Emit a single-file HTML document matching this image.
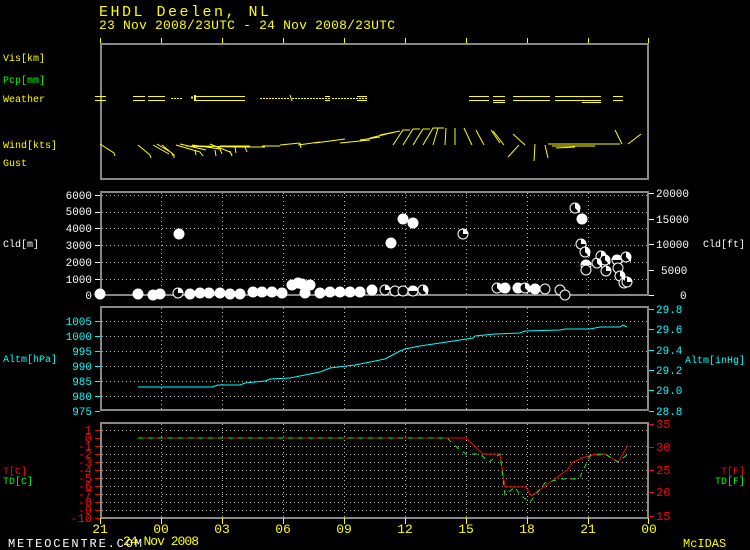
<!DOCTYPE html>
<html><head><meta charset="utf-8"><style>
html,body{margin:0;padding:0;background:#000;}
svg{display:block;}
text{font-family:"Liberation Mono",monospace;}
</style></head><body>
<svg width="750" height="550" viewBox="0 0 750 550" xmlns="http://www.w3.org/2000/svg">
<rect width="750" height="550" fill="#000"/>
<text x="99" y="16" font-size="15" fill="#ff0" textLength="170">EHDL  Deelen,  NL</text>
<text x="99" y="29" font-size="13" fill="#ff0" textLength="296">23 Nov 2008/23UTC - 24 Nov 2008/23UTC</text>
<g stroke="#ff0" stroke-width="1">
<line x1="100.5" y1="38" x2="100.5" y2="43"/><line x1="161.5" y1="38" x2="161.5" y2="43"/><line x1="222.5" y1="38" x2="222.5" y2="43"/><line x1="283.5" y1="38" x2="283.5" y2="43"/><line x1="344.5" y1="38" x2="344.5" y2="43"/><line x1="405.5" y1="38" x2="405.5" y2="43"/><line x1="466.5" y1="38" x2="466.5" y2="43"/><line x1="527.5" y1="38" x2="527.5" y2="43"/><line x1="588.5" y1="38" x2="588.5" y2="43"/><line x1="648.5" y1="38" x2="648.5" y2="43"/>
</g>
<g fill="none" stroke="#888" stroke-width="2">
<rect x="101" y="44" width="547" height="135"/>
<rect x="101" y="192" width="547" height="103"/>
<rect x="101" y="307" width="547" height="103"/>
<rect x="101" y="423" width="547" height="95"/>
</g>
<g stroke="#bbb" stroke-width="1" stroke-dasharray="1 3">
<path d="M161.5 193V294M222.5 193V294M283.5 193V294M344.5 193V294M405.5 193V294M466.5 193V294M527.5 193V294M588.5 193V294"/>
<path d="M102 195.5H647M102 212.5H647M102 228.5H647M102 245.5H647M102 262.5H647M102 279.5H647"/>
<path d="M161.5 308V409M222.5 308V409M283.5 308V409M344.5 308V409M405.5 308V409M466.5 308V409M527.5 308V409M588.5 308V409"/>
<path d="M102 321.5H647M102 336.5H647M102 351.5H647M102 366.5H647M102 381.5H647M102 396.5H647"/>
<path d="M161.5 424V517M222.5 424V517M283.5 424V517M344.5 424V517M405.5 424V517M466.5 424V517M527.5 424V517M588.5 424V517"/>
<path d="M102 430.5H647M102 446.5H647M102 454.5H647M102 462.5H647M102 470.5H647M102 478.5H647M102 486.5H647M102 494.5H647M102 502.5H647M102 510.5H647"/>
</g>
<g font-size="10">
<text x="3" y="61" fill="#ff0">Vis[km]</text>
<text x="3" y="83" fill="#0f0">Pcp[mm]</text>
<text x="3" y="102" fill="#ff0">Weather</text>
<text x="3" y="148" fill="#ff0">Wind[kts]</text>
<text x="3" y="166" fill="#ff0">Gust</text>
<text x="3" y="247" fill="#fff">Cld[m]</text>
<text x="3" y="362" fill="#0ff">Altm[hPa]</text>
<text x="3" y="474" fill="#f00">T[C]</text>
<text x="3" y="484" fill="#0f0">TD[C]</text>
<text x="703" y="247" fill="#fff">Cld[ft]</text>
<text x="685" y="363" fill="#0ff">Altm[inHg]</text>
<text x="721" y="474" fill="#f00">T[F]</text>
<text x="715" y="484" fill="#0f0">TD[F]</text>
</g>
<g font-size="11" fill="#fff" text-anchor="end">
<text x="92" y="199">6000</text><text x="92" y="215">5000</text><text x="92" y="232">4000</text><text x="92" y="249">3000</text><text x="92" y="266">2000</text><text x="92" y="283">1000</text><text x="92" y="299">0</text>
</g>
<g font-size="11" fill="#fff">
<text x="656" y="197">20000</text><text x="656" y="223">15000</text><text x="656" y="248">10000</text><text x="661" y="274">5000</text><text x="680" y="299">0</text>
</g>
<g stroke="#fff"><path d="M95 195.5H100M95 212.5H100M95 228.5H100M95 245.5H100M95 262.5H100M95 279.5H100M95 295.5H100M649 193.5H654M649 219.5H654M649 244.5H654M649 270.5H654M649 295.5H654"/></g>
<g font-size="11" fill="#0ff" text-anchor="end">
<text x="92" y="325">1005</text><text x="92" y="340">1000</text><text x="92" y="355">995</text><text x="92" y="370">990</text><text x="92" y="385">985</text><text x="92" y="400">980</text><text x="92" y="415">975</text>
</g>
<g font-size="11" fill="#0ff">
<text x="656" y="313">29.8</text><text x="656" y="333">29.6</text><text x="656" y="354">29.4</text><text x="656" y="374">29.2</text><text x="656" y="394">29.0</text><text x="656" y="415">28.8</text>
</g>
<g stroke="#0ff"><path d="M95 321.5H100M95 336.5H100M95 351.5H100M95 366.5H100M95 381.5H100M95 396.5H100M95 411.5H100M649 309.5H654M649 329.5H654M649 350.5H654M649 370.5H654M649 390.5H654M649 411.5H654"/></g>
<g font-size="12" fill="#f00" text-anchor="end">
<text x="92" y="434">1</text><text x="92" y="442">0</text><text x="92" y="450">-1</text><text x="92" y="458">-2</text><text x="92" y="466">-3</text><text x="92" y="474">-4</text><text x="92" y="482">-5</text><text x="92" y="490">-6</text><text x="92" y="498">-7</text><text x="92" y="506">-8</text><text x="92" y="514">-9</text><text x="92" y="522">-10</text>
</g>
<g font-size="12" fill="#f00">
<text x="656" y="428">35</text><text x="656" y="451">30</text><text x="656" y="474">25</text><text x="656" y="496">20</text><text x="656" y="520">15</text>
</g>
<g stroke="#f00"><path d="M95 430.5H100M95 438.5H100M95 446.5H100M95 454.5H100M95 462.5H100M95 470.5H100M95 478.5H100M95 486.5H100M95 494.5H100M95 502.5H100M95 510.5H100M95 518.5H100M649 424.5H654M649 447.5H654M649 470.5H654M649 492.5H654M649 516.5H654"/></g>
<g stroke="#ff0"><path d="M100.5 518V524M161.5 518V524M222.5 518V524M283.5 518V524M344.5 518V524M405.5 518V524M466.5 518V524M527.5 518V524M588.5 518V524M648.5 518V524"/></g>
<g font-size="13" fill="#ff0" text-anchor="middle">
<text x="100" y="533">21</text><text x="161" y="533">00</text><text x="222" y="533">03</text><text x="283" y="533">06</text><text x="344" y="533">09</text><text x="405" y="533">12</text><text x="466" y="533">15</text><text x="527" y="533">18</text><text x="588" y="533">21</text><text x="649" y="533">00</text>
</g>
<text x="123" y="545" font-size="13" fill="#ff0" textLength="76">24 Nov 2008</text>
<text x="8" y="547" font-size="12" fill="#fff" textLength="134">METEOCENTRE.COM</text>
<text x="683" y="547" font-size="12" fill="#ff0">McIDAS</text>
<g stroke="#ff0" stroke-width="1">
<path d="M95 96.5H106M95 100.5H106M133 96.5H145M133 100.5H145M148 96.5H165M148 100.5H165M195 96.5H245M195 100.5H245M469 96.5H489M469 100.5H489M493 96.5H505M493 100.5H505M493 102.5H505M513 96.5H550M513 100.5H550M555 96.5H572M555 100.5H572M572 96.5H601M572 100.5H601M582 102.5H601M613 96.5H623M613 100.5H623"/>
<path d="M195 95V101M191 97.5H193" stroke-width="2"/>
<path d="M171 98.5H182M260 98.5H290M292 98.5H330M332 98.5H367" stroke-dasharray="2 1"/>
<path d="M357 96.5H367M357 100.5H367M325 96.5H330M325 100.5H330M290 95L292 101"/>
</g>
<g stroke="#ff0" stroke-width="1" fill="none">
<path d="M100 144L114 153L115 156M138 145L150 155L151 158M153 145L169 154M157 144L172 153L173 156M162 145L174 155L174 158"/>
<path d="M176 145L200 152L203 156M180 144L206 150M186 146L212 147M192 145L220 149L222 154M200 146L235 147L236 153M210 144L230 152L232 155M220 146L250 146M235 147L265 147M262 146L280 146M280 145L300 143M298 145L320 142M315 143L345 139M340 143L370 140M360 140L380 137M370 138L395 132M380 135L400 131"/>
<path d="M195 150L196 155M215 150L216 156M230 151L232 156M245 147L247 152M300 143L301 148"/>
<path d="M393 145L403 130L410 130M403 145L413 129L420 129M413 145L423 129L430 129M423 145L433 128L440 128M433 145L438 128L444 128M445 145L446 128M455 145L455 128M464 128L472 145M476 130L484 145M491 130L500 143M493 131L504 145M513 134L525 145M519 145L508 157M535 144L534 161M545 145L548 158M548 144L620 144M552 146L595 146M556 148L575 147M600 144L620 144M615 130L622 144M628 144L641 134"/>
</g>
<polyline fill="none" stroke="#0ff" stroke-width="1" points="138,387 212,387 218,385 240,385 245,383 265,381 270,379 290,378 305,375 320,372 330,368 355,365 385,359 400,351 405,349 420,346 440,343 460,340 473,338 475,336 495,334 520,333 525,331 560,330 565,329 590,329 600,327 620,327 623,325 627,327"/>
<polyline fill="none" stroke="#f00" points="138,438 466,438 483,454 500,454 505,487 526,487 531,496 567,470 573,462 582,458 595,454 605,454 618,462 628,445"/>
<polyline fill="none" stroke="#0f0" stroke-dasharray="5 5" points="138,438 447,438 460,450 466,454 480,454 489,462 500,454 505,495 515,487 520,495 530,502 545,483 560,479 579,479 590,456 605,454 618,462 628,454"/>
<g fill="#fff" stroke="#fff">
<circle cx="100" cy="294" r="5"/><circle cx="138" cy="294" r="5"/><circle cx="153" cy="295" r="5"/><circle cx="160" cy="294" r="5"/><circle cx="179" cy="234" r="5"/>
<circle cx="190" cy="294" r="5"/><circle cx="200" cy="293" r="5"/><circle cx="209" cy="293" r="5"/><circle cx="220" cy="293" r="5"/><circle cx="230" cy="294" r="5"/><circle cx="240" cy="294" r="5"/><circle cx="253" cy="292" r="5"/><circle cx="262" cy="292" r="5"/><circle cx="272" cy="292" r="5"/><circle cx="282" cy="293" r="5"/><circle cx="292" cy="285" r="5"/><circle cx="298" cy="283" r="5"/><circle cx="302" cy="284" r="5"/><circle cx="310" cy="285" r="5"/><circle cx="305" cy="293" r="5"/><circle cx="320" cy="293" r="5"/><circle cx="330" cy="292" r="5"/><circle cx="340" cy="292" r="5"/><circle cx="350" cy="292" r="5"/><circle cx="360" cy="292" r="5"/><circle cx="372" cy="290" r="5"/><circle cx="391" cy="243" r="5"/><circle cx="403" cy="219" r="5"/><circle cx="413" cy="223" r="5"/>
<circle cx="505" cy="288" r="5"/><circle cx="518" cy="288" r="5"/><circle cx="535" cy="289" r="5"/><circle cx="582" cy="219" r="5"/>
</g>
<g fill="#000" stroke="#fff">
<circle cx="178" cy="293" r="5"/><circle cx="385" cy="290" r="5"/><circle cx="395" cy="291" r="5"/><circle cx="403" cy="291" r="5"/><circle cx="413" cy="291" r="5"/><circle cx="423" cy="290" r="5"/><circle cx="463" cy="234" r="5"/><circle cx="497" cy="288" r="5"/><circle cx="525" cy="288" r="5"/><circle cx="545" cy="289" r="5"/><circle cx="560" cy="290" r="5"/><circle cx="565" cy="295" r="5"/><circle cx="575" cy="208" r="5"/><circle cx="581" cy="244" r="5"/><circle cx="585" cy="252" r="5"/><circle cx="586" cy="265" r="5"/><circle cx="586" cy="270" r="5"/><circle cx="597" cy="263" r="5"/><circle cx="601" cy="256" r="5"/><circle cx="606" cy="271" r="5"/><circle cx="605" cy="260" r="5"/><circle cx="617" cy="260" r="5"/><circle cx="626" cy="257" r="5"/><circle cx="618" cy="268" r="5"/><circle cx="620" cy="276" r="5"/><circle cx="624" cy="283" r="5"/><circle cx="627" cy="282" r="5"/>
</g>
<g fill="#fff">
<path d="M178 293V288A5 5 0 0 1 183 293Z"/><path d="M385 290V285A5 5 0 0 1 390 290Z"/><path d="M413 291H408A5 5 0 0 1 418 291Z"/><path d="M423 290V285A5 5 0 0 1 428 290V295Z"/><path d="M463 234V229A5 5 0 0 1 468 234Z"/><path d="M497 288V283A5 5 0 0 1 502 288V293Z"/><path d="M525 288V283A5 5 0 0 1 530 288V293Z"/><path d="M575 208V203A5 5 0 0 1 580 208V213Z"/><path d="M581 244V239A5 5 0 0 1 586 244Z"/><path d="M585 252V247A5 5 0 0 1 590 252V257Z"/><path d="M586 265H581A5 5 0 0 1 591 265Z"/><path d="M597 263V258A5 5 0 0 1 602 263V268Z"/><path d="M601 256V251A5 5 0 0 1 606 256Z"/><path d="M605 260V255A5 5 0 0 1 610 260V265Z"/><path d="M606 271V266A5 5 0 0 1 611 271Z"/><path d="M617 260H612A5 5 0 0 1 622 260Z"/><path d="M626 257V252A5 5 0 0 1 631 257V262Z"/><path d="M620 276V271A5 5 0 0 1 625 276V281Z"/><path d="M627 282V277A5 5 0 0 1 632 282Z"/>
</g>
</svg>
</body></html>
